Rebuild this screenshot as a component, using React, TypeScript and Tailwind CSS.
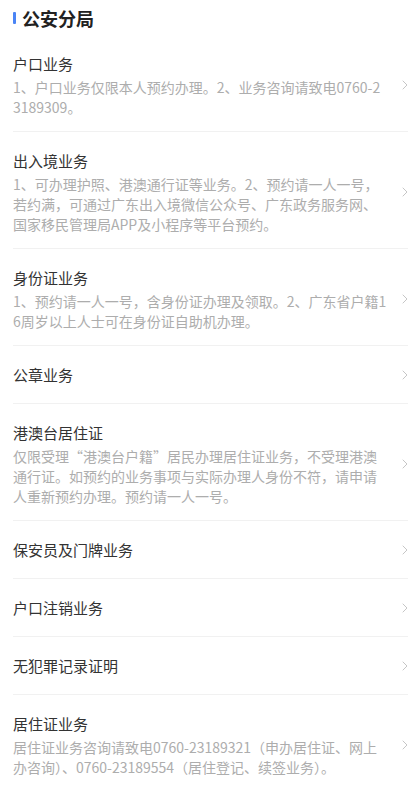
const items: { title: string; desc?: string }[] = [
  { title: "户口业务", desc: "1、户口业务仅限本人预约办理。2、业务咨询请致电0760-23189309。" },
  {
    title: "出入境业务",
    desc: "1、可办理护照、港澳通行证等业务。2、预约请一人一号，若约满，可通过广东出入境微信公众号、广东政务服务网、国家移民管理局APP及小程序等平台预约。",
  },
  {
    title: "身份证业务",
    desc: "1、预约请一人一号，含身份证办理及领取。2、广东省户籍16周岁以上人士可在身份证自助机办理。",
  },
  { title: "公章业务" },
  {
    title: "港澳台居住证",
    desc: "仅限受理“港澳台户籍”居民办理居住证业务，不受理港澳通行证。如预约的业务事项与实际办理人身份不符，请申请人重新预约办理。预约请一人一号。",
  },
  { title: "保安员及门牌业务" },
  { title: "户口注销业务" },
  { title: "无犯罪记录证明" },
  {
    title: "居住证业务",
    desc: "居住证业务咨询请致电0760-23189321（申办居住证、网上办咨询）、0760-23189554（居住登记、续签业务）。",
  },
];

const Chevron = () => (
  <svg width="6" height="10" viewBox="0 0 6 10" fill="none" className="shrink-0">
    <path d="M1 1l4 4-4 4" stroke="#c6c6c6" strokeWidth="1" strokeLinecap="round" strokeLinejoin="round" />
  </svg>
);

export default function App() {
  return (
    <div
      className="min-h-screen bg-white pl-[13px] pr-[11px]"
      style={{ fontFamily: '"Noto Sans CJK SC", "Noto Sans", sans-serif' }}
    >
      <div className="flex h-[35px] items-center gap-[6px]">
        <div className="h-[12px] w-[3px] rounded-[1px] bg-[#4a84f5]" />
        <h1 className="text-[18px] font-bold leading-[24px] text-[#222]">公安分局</h1>
      </div>

      <div className="flex flex-col">
        {items.map((item, i) => (
          <div
            key={item.title}
            className={`flex items-center justify-between ${
              i < items.length - 1 ? "border-b border-[#f1f1f1]" : ""
            } ${item.desc ? "pt-[18px] pb-[14px]" : "h-[58px]"}`}
          >
            <div className="w-[374px]">
              <div className="text-[15px] leading-[22px] text-[#333]">{item.title}</div>
              {item.desc && (
                <p className="mt-[2px] break-all text-[14px] leading-[20px] text-[#adadad]">{item.desc}</p>
              )}
            </div>
            <Chevron />
          </div>
        ))}
      </div>
    </div>
  );
}
